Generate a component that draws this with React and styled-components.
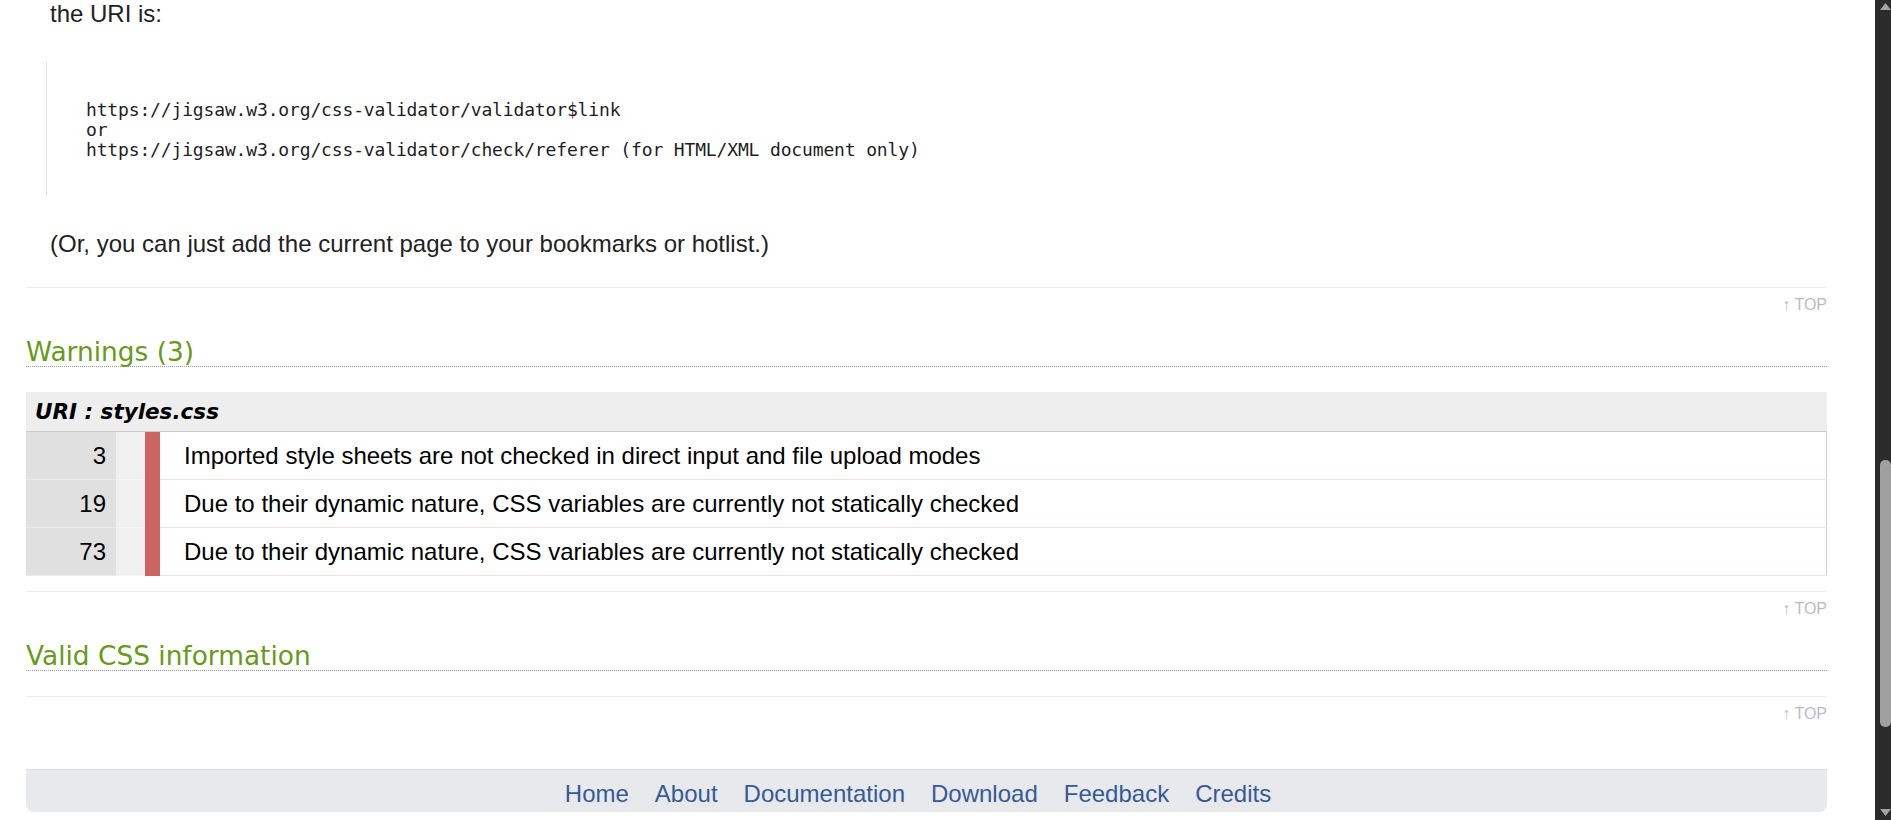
import React from 'react';
import styled, { createGlobalStyle } from 'styled-components';

const GlobalStyle = createGlobalStyle`
  html, body {
    margin: 0;
    padding: 0;
    height: 100%;
    overflow: hidden;
    background: #fff;
  }
  #root { height: 100%; }
`;

const Frame = styled.div`
  display: flex;
  height: 100vh;
  overflow: hidden;
  background: #fff;
  color: #222;
  font-family: "Liberation Sans", Arial, sans-serif;
`;

const Content = styled.main`
  flex: 1;
  min-width: 0;
`;

const Page = styled.div`
  width: 1801px;
  margin-left: 26px;
`;

const Paragraph = styled.p`
  margin: ${p => p.$top || 0}px 0 0 24px;
  font-size: 24px;
  color: #222;
`;

const CodeQuote = styled.blockquote`
  margin: ${p => p.$top}px 0 0 20px;
  padding: 39px 0 37px 39px;
  border-left: 1px solid #e2e2e2;
`;

const CodeLines = styled.pre`
  margin: 0;
  font-family: "DejaVu Sans Mono", "Liberation Mono", monospace;
  font-size: 18px;
  line-height: 20px;
  letter-spacing: -0.15px;
  color: #1e1e1e;
`;

const BackTop = styled.p`
  margin: ${p => p.$top}px 0 0;
  padding-top: 8px;
  border-top: 1px solid #ebebf0;
  text-align: right;
  font-size: 16px;
  line-height: 18px;
  color: #bbbbc8;
`;

const SectionTitle = styled.h3`
  margin: ${p => p.$top}px 0 0;
  font-family: "DejaVu Sans", Verdana, sans-serif;
  font-size: 26.4px;
  line-height: 28px;
  font-weight: normal;
  color: #689a1c;
  border-bottom: 1px dotted #9a9a9a;
`;

const ErrorSection = styled.div`
  margin-top: 25px;
`;

const TableCaption = styled.h4`
  margin: 0;
  height: 39px;
  padding-left: 9px;
  line-height: 39px;
  background: #eeeeee;
  border-bottom: 1px solid #cccccc;
  font-family: "DejaVu Sans", Verdana, sans-serif;
  font-size: 21.5px;
  font-weight: bold;
  font-style: italic;
  color: #000;
`;

const Row = styled.div`
  display: grid;
  grid-template-columns: 90px 29px 15px 1fr;
  height: 48px;
  font-size: 24px;
  color: #000;
`;

const LineCell = styled.div`
  background: #e0e0e0;
  border-bottom: 1px solid #ebebeb;
  padding-right: 10px;
  text-align: right;
  line-height: 47px;
`;

const ContextCell = styled.div`
  background: #f0f0f0;
  border-bottom: 1px solid #f6f6f6;
`;

const LevelCell = styled.div`
  background: #cd6464;
`;

const MessageCell = styled.div`
  padding-left: 24px;
  line-height: 47px;
  border-bottom: 1px solid #f1dede;
  border-right: 1px solid #cfcfcf;
  white-space: nowrap;
`;

const NavBar = styled.nav`
  display: flex;
  justify-content: center;
  gap: 26px;
  margin-top: 46px;
  padding: 10px 17px 4px 0;
  background: #e8e9ed;
  border-top: 1px solid #dcdde2;
  border-radius: 0 0 8px 8px;
`;

const NavLink = styled.a`
  font-size: 24px;
  color: #365b94;
  text-decoration: none;
`;

/* browser scrollbar of the window, page scrolled near the bottom */
const Scrollbar = styled.div`
  flex: 0 0 16px;
  display: flex;
  flex-direction: column;
  background: #2b2b2b;
`;

const ScrollArrow = styled.svg`
  display: block;
  flex: none;
  width: 16px;
  height: 16px;
`;

const ScrollTrack = styled.div`
  flex: 1;
  display: flex;
  flex-direction: column;
`;

const ScrollThumb = styled.div`
  margin: ${p => p.$offset}px 0 0 5px;
  width: 11px;
  height: ${p => p.$size}px;
  border-radius: 5px;
  background: #9f9f9f;
`;

const warnings = [
  { line: 3, text: 'Imported style sheets are not checked in direct input and file upload modes' },
  { line: 19, text: 'Due to their dynamic nature, CSS variables are currently not statically checked' },
  { line: 73, text: 'Due to their dynamic nature, CSS variables are currently not statically checked' },
];

const navItems = ['Home', 'About', 'Documentation', 'Download', 'Feedback', 'Credits'];

const linkText =
  'https://jigsaw.w3.org/css-validator/validator$link\nor\nhttps://jigsaw.w3.org/css-validator/check/referer (for HTML/XML document only)';

function App() {
  return (
    <>
      <GlobalStyle />
      <Frame>
        <Content>
          <Page>
            <Paragraph>the URI is:</Paragraph>

            <CodeQuote $top={33}>
              <CodeLines>{linkText}</CodeLines>
            </CodeQuote>
            <Paragraph $top={33}>(Or, you can just add the current page to your bookmarks or hotlist.)</Paragraph>

            <BackTop $top={29}>↑ TOP</BackTop>

            <SectionTitle $top={24}>Warnings (3)</SectionTitle>
            <ErrorSection>
              <TableCaption>URI : styles.css</TableCaption>
              {warnings.map(w => (
                <Row key={w.line}>
                  <LineCell>{w.line}</LineCell>
                  <ContextCell />
                  <LevelCell />
                  <MessageCell>{w.text}</MessageCell>
                </Row>
              ))}
            </ErrorSection>

            <BackTop $top={15}>↑ TOP</BackTop>

            <SectionTitle $top={24}>Valid CSS information</SectionTitle>

            <BackTop $top={25}>↑ TOP</BackTop>

            <NavBar>
              {navItems.map(item => (
                <NavLink key={item} href="#">{item}</NavLink>
              ))}
            </NavBar>
          </Page>
        </Content>

        <Scrollbar>
          <ScrollArrow viewBox="0 0 16 16">
            <polygon points="5,10 10.5,3 16,10" fill="#a3a3a3" />
          </ScrollArrow>
          <ScrollTrack>
            <ScrollThumb $offset={444} $size={267} />
          </ScrollTrack>
          <ScrollArrow viewBox="0 0 16 16">
            <polygon points="5,5 16,5 10.5,12" fill="#a3a3a3" />
          </ScrollArrow>
        </Scrollbar>
      </Frame>
    </>
  );
}

export default App;
